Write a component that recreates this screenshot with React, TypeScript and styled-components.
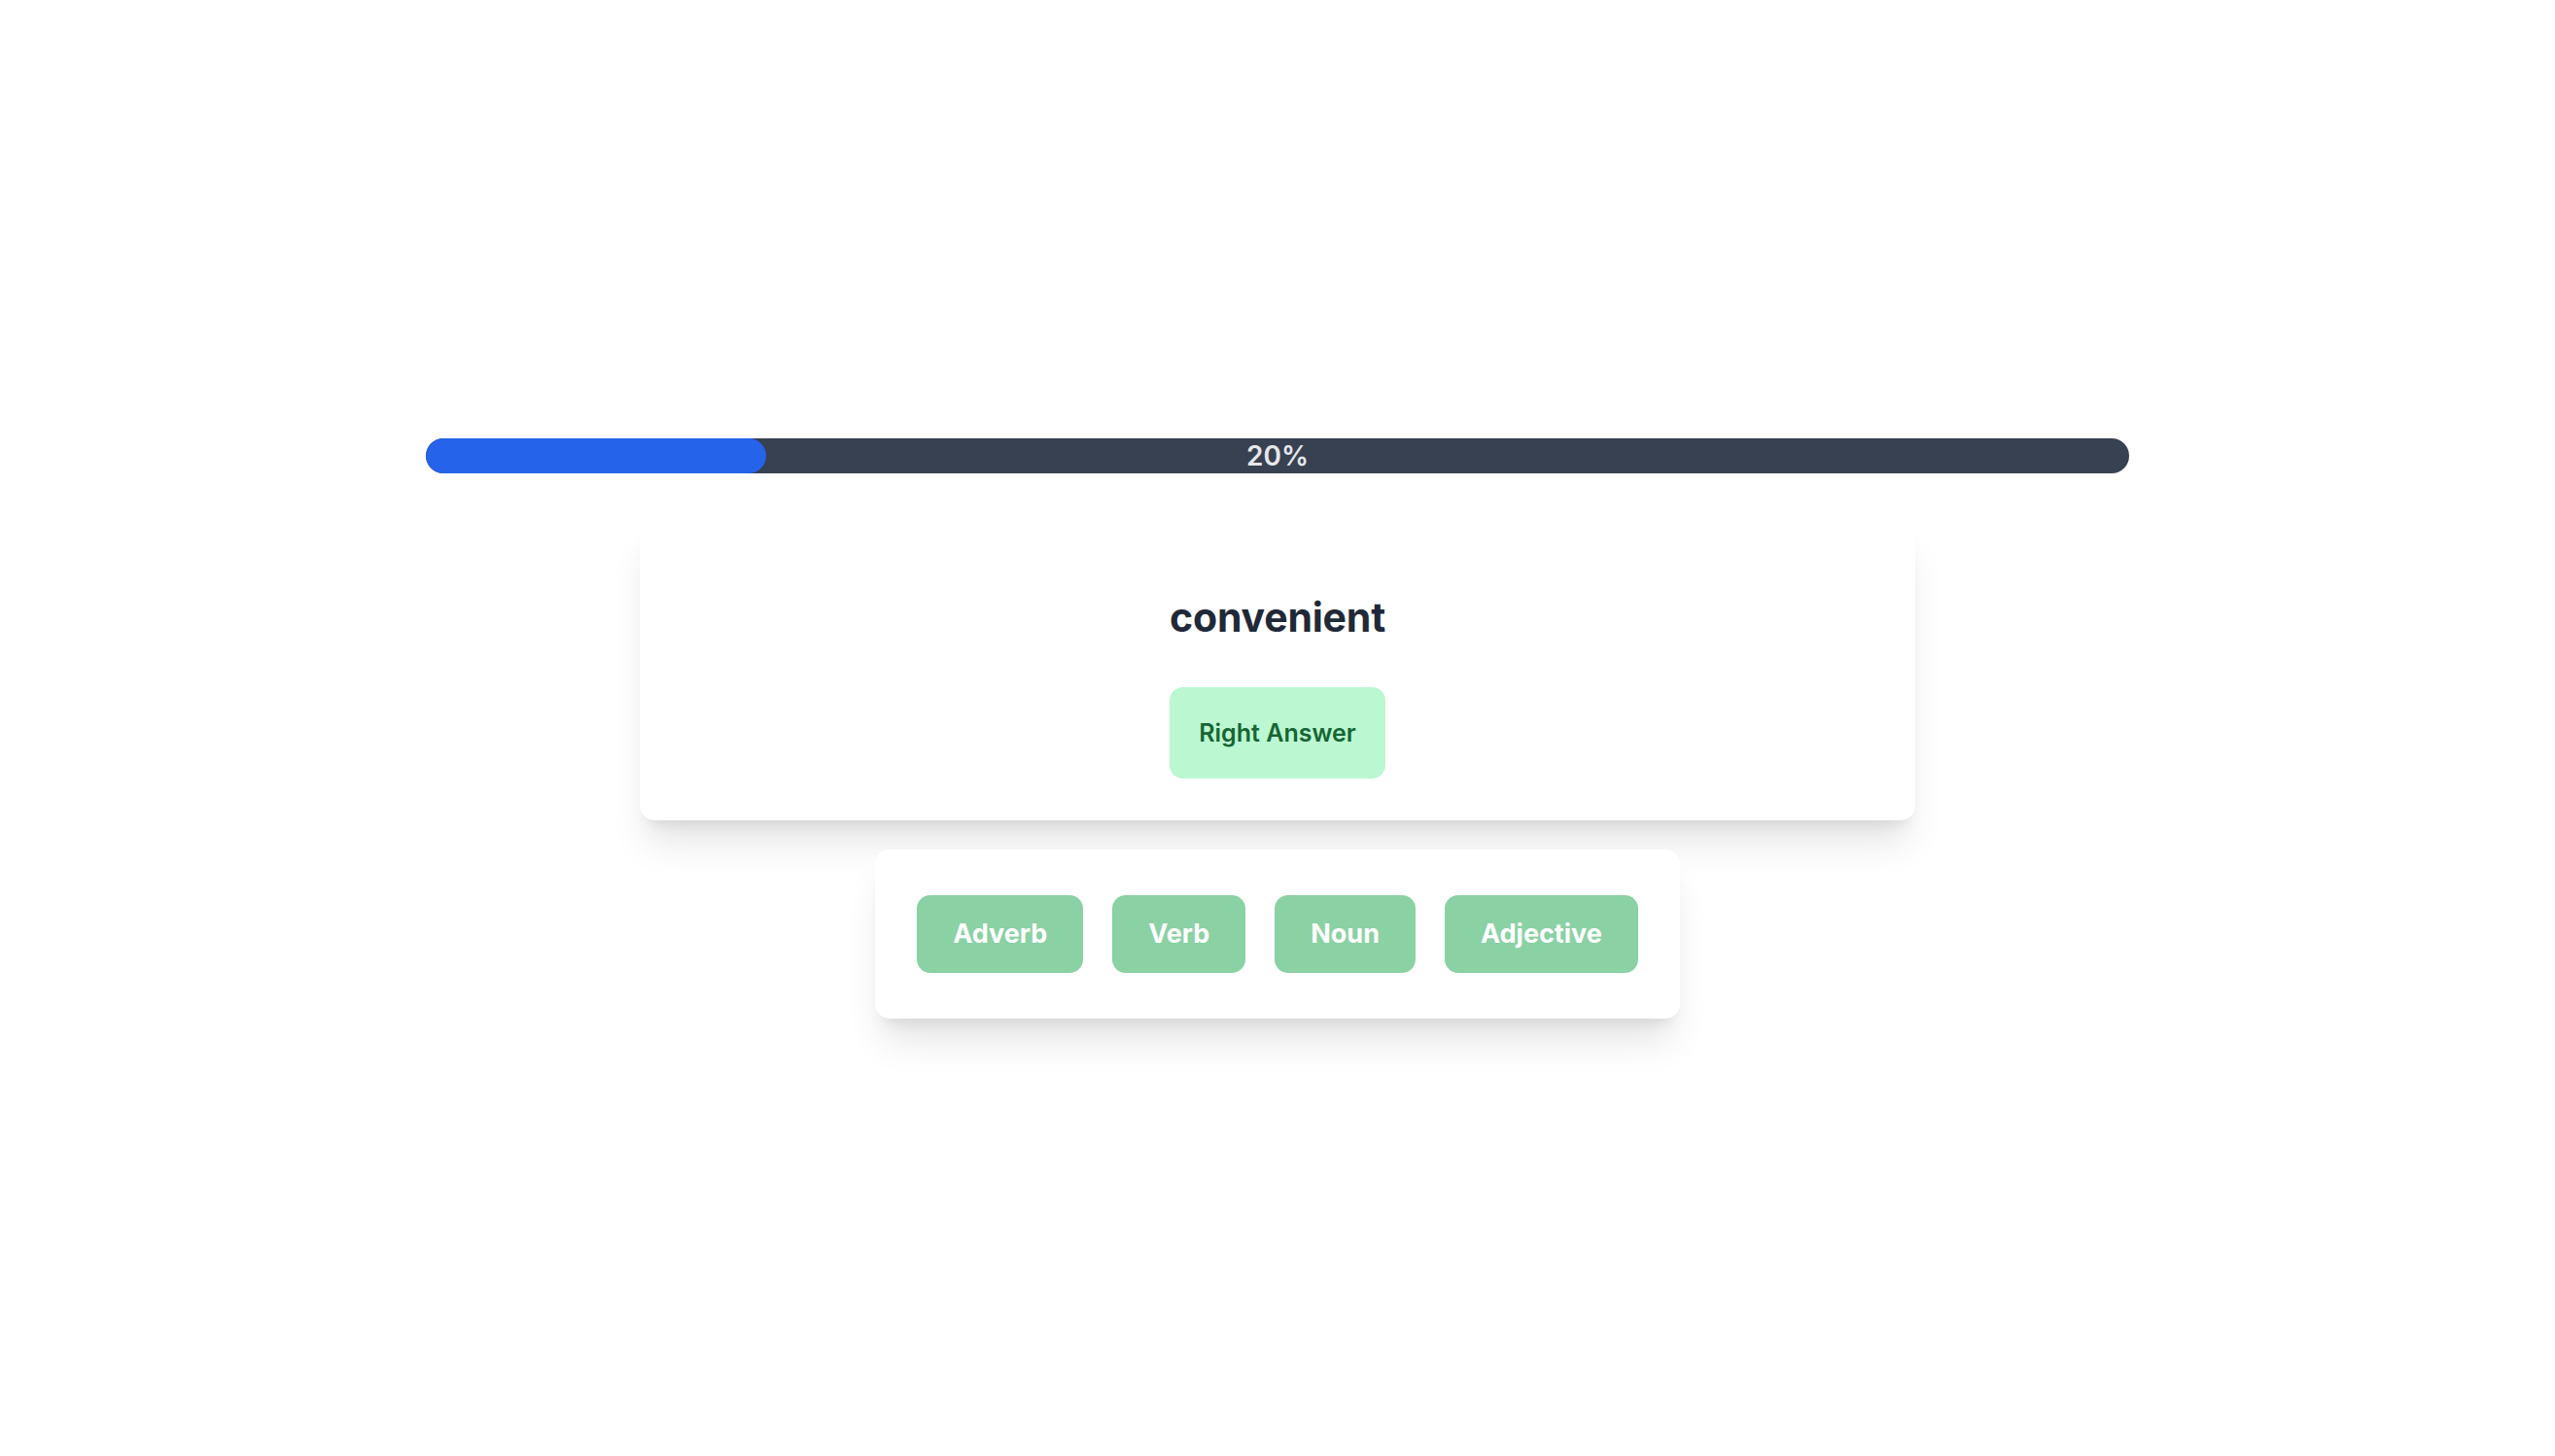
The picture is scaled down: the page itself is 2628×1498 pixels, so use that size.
import React from 'react'
import styled, { createGlobalStyle } from 'styled-components'

const GlobalStyle = createGlobalStyle`
  html, body {
    margin: 0;
    padding: 0;
    background: #ffffff;
  }
  body {
    font-family: Inter, 'Noto Sans', 'Liberation Sans', sans-serif;
  }
`

const options = ['Adverb', 'Verb', 'Noun', 'Adjective']
const progress = 20

export default function App() {
  return (
    <>
      <GlobalStyle />
      <Page>
        <Quiz>
          <Track>
            <Fill style={{ width: `${progress}%` }} />
            <Percent>{progress}%</Percent>
          </Track>
          <WordCard>
            <Word>convenient</Word>
            <AnswerBadge>Right Answer</AnswerBadge>
          </WordCard>
          <OptionsCard>
            {options.map((o) => (
              <OptionButton key={o} disabled>
                {o}
              </OptionButton>
            ))}
          </OptionsCard>
        </Quiz>
      </Page>
    </>
  )
}

const Page = styled.div`
  min-height: 100vh;
  display: flex;
  align-items: center;
  justify-content: center;
`

const Quiz = styled.div`
  width: 1752px;
  display: flex;
  flex-direction: column;
  align-items: center;
`

const Track = styled.div`
  position: relative;
  width: 100%;
  height: 36px;
  border-radius: 18px;
  background: #374151;
  overflow: hidden;
  display: flex;
  align-items: center;
  justify-content: center;
`

const Fill = styled.div`
  position: absolute;
  left: 0;
  top: 0;
  bottom: 0;
  background: #2563eb;
  border-radius: 18px;
`

const Percent = styled.span`
  position: relative;
  font-size: 28px;
  font-weight: 600;
  line-height: 36px;
  color: #e5e7eb;
`

const WordCard = styled.div`
  margin-top: 47px;
  width: 1312px;
  box-sizing: border-box;
  padding: 76px 40px 43px;
  background: #ffffff;
  border-radius: 15px;
  box-shadow: 0 30px 37px -7px rgba(0, 0, 0, 0.1), 0 12px 15px -9px rgba(0, 0, 0, 0.1);
  display: flex;
  flex-direction: column;
  align-items: center;
`

const Word = styled.h2`
  margin: 0;
  font-size: 41px;
  line-height: 50px;
  font-weight: 700;
  letter-spacing: -0.2px;
  color: #1f2937;
`

const AnswerBadge = styled.div`
  margin-top: 47px;
  padding: 29px 30px;
  line-height: 36px;
  font-size: 25px;
  font-weight: 600;
  color: #166534;
  background: #bbf7d0;
  border-radius: 14px;
`

const OptionsCard = styled.div`
  margin-top: 30px;
  padding: 47px 43px;
  background: #ffffff;
  border-radius: 15px;
  box-shadow: 0 30px 37px -7px rgba(0, 0, 0, 0.1), 0 12px 15px -9px rgba(0, 0, 0, 0.1);
  display: flex;
  gap: 30px;
`

const OptionButton = styled.button`
  border: none;
  font-family: inherit;
  padding: 19px 37px;
  line-height: 42px;
  font-size: 27px;
  font-weight: 700;
  color: #ffffff;
  background: #8ad1a4;
  border-radius: 14px;
  cursor: not-allowed;
`
